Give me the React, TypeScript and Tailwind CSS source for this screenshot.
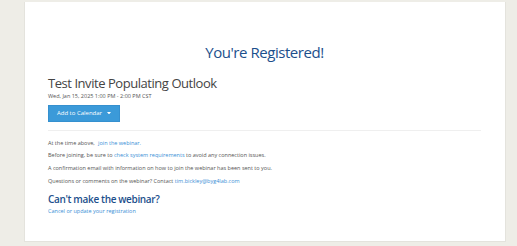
import React from "react";

export default function App() {
  const font = { fontFamily: '"Open Sans", "Noto Sans", sans-serif' };
  return (
    <div
      className="w-[517px] h-[246px] bg-[#eeede7] pl-[24px] pr-[11px] pt-[2px] pb-[4px] overflow-hidden"
      style={font}
    >
      <div className="h-full bg-white border border-[#e4e3dd] border-t-0 pl-[23px] pr-[24px]">
        <h1 className="text-center text-[#1c4f8c] text-[15px] font-medium tracking-[-0.45px] leading-none pt-[43px]">
          You're Registered!
        </h1>
        <h2 className="text-[#444] text-[13px] font-medium tracking-[-0.45px] leading-none mt-[16.5px]">
          Test Invite Populating Outlook
        </h2>
        <div className="text-[#555] text-[5.5px] leading-none mt-[4.5px]">
          Wed, Jan 15, 2025 1:00 PM - 2:00 PM CST
        </div>
        <button className="mt-[5px] w-[72px] h-[17px] bg-[#3b9ad9] text-white text-[6px] flex items-center justify-center gap-[5px] border border-[#3590cf]">
          <span>Add to Calendar</span>
          <svg width="4" height="2.5" viewBox="0 0 4 2.5">
            <path d="M0 0 L4 0 L2 2.5 Z" fill="white" />
          </svg>
        </button>
        <div className="mt-[8px] border-t border-[#efefef]" />
        <div className="text-[#555] text-[5.5px] leading-[12.7px] mt-[6px]">
          <p>
            At the time above, <a className="text-[#3a8fd6] ml-[2px]">join the webinar.</a>
          </p>
          <p>
            Before joining, be sure to{" "}
            <a className="text-[#3a8fd6]">check system requirements</a> to avoid any
            connection issues.
          </p>
          <p>A confirmation email with information on how to join the webinar has been sent to you.</p>
          <p>
            Questions or comments on the webinar? Contact{" "}
            <a className="text-[#3a8fd6]">tim.bickley@byg4lab.com</a>
          </p>
        </div>
        <h3 className="text-[#1c4f8c] text-[10px] font-semibold tracking-[-0.35px] leading-none mt-[7px]">
          Can't make the webinar?
        </h3>
        <a className="block text-[#3a8fd6] text-[5.5px] leading-none mt-[4.5px]">
          Cancel or update your registration
        </a>
      </div>
    </div>
  );
}
